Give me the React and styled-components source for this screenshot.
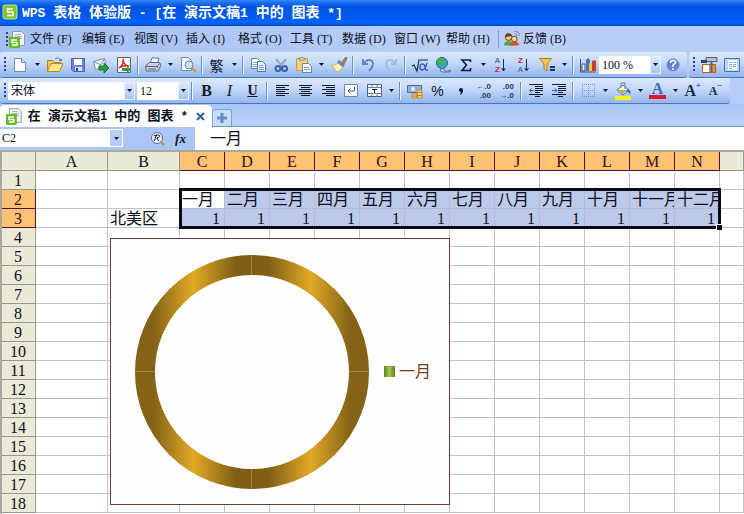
import React, { useState } from "react";
import styled, { createGlobalStyle, css } from "styled-components";

const cjk = '"Liberation Serif", "Noto Sans CJK SC", sans-serif';

const GlobalStyle = createGlobalStyle`
  *, *::before, *::after { box-sizing: border-box; }
  body { margin: 0; overflow: hidden; background: #fff; }
  button, input, select { font: inherit; color: inherit; }
`;

const Page = styled.div`
  display: flex;
  flex-direction: column;
  height: 100vh;
  overflow: hidden;
  font: 12px/16px ${cjk};
  color: #0a1020;
`;

const TitleBar = styled.header`
  display: flex;
  align-items: center;
  gap: 4px;
  flex: none;
  height: 26px;
  padding: 0 2px 2px;
  color: #fff;
  background: linear-gradient(#2f8af8 0, #1a6df0 3px, #0054e3 7px, #0058ee 16px, #0066ff 22px, #0048c8 26px);
`;

const TitleText = styled.h1`
  margin: 0;
  font: bold 14px/20px "Noto Sans CJK SC", sans-serif;
  white-space: pre;
`;

const Latin = styled.span`
  font-family: "Liberation Mono", monospace;
  font-size: ${(p) => p.$size}px;
`;

const MenuBar = styled.nav`
  display: flex;
  align-items: center;
  flex: none;
  height: 26px;
  padding-left: 2px;
  background: linear-gradient(90deg, #a3bef3, #b9cff8 60%, #b9cff8);
`;

const MenuItem = styled.button`
  display: flex;
  align-items: center;
  gap: 3px;
  width: ${(p) => (p.$wide ? "auto" : "52px")};
  height: 22px;
  padding: 0;
  border: 0;
  background: none;
  white-space: nowrap;
`;

const MenuIcon = styled.span`
  display: flex;
  width: 21px;
`;

const MenuDivider = styled.span`
  flex: none;
  width: 1px;
  height: 18px;
  margin-right: 4px;
  background: #7c9cd4;
`;

const GripDots = styled.span`
  flex: none;
  width: ${(p) => p.$width || 8}px;
  height: 15px;
  background: repeating-linear-gradient(#27418e 0 2px, transparent 2px 4px) 4px 0 / 2px 15px no-repeat;
`;

const ToolRow = styled.div`
  display: flex;
  flex: none;
  gap: 2px;
  height: 26px;
  background: #b5cdf8;
`;

const Toolbar = styled.div`
  display: flex;
  align-items: center;
  flex: ${(p) => (p.$fill ? "1 1 0" : "none")};
  min-width: 0;
  height: 26px;
  overflow: hidden;
  padding-right: ${(p) => (p.$fill ? 0 : 3)}px;
  border-bottom: 1px solid #4a76bd;
  border-radius: ${(p) => (p.$fill ? "3px 0 0 3px" : "3px")};
  background: linear-gradient(#dde9fd, #c2d7fa 45%, #94b4ec);
`;

const ToolButton = styled.button`
  display: flex;
  flex: none;
  align-items: center;
  justify-content: center;
  width: 23px;
  height: 23px;
  padding: 0;
  border: 0;
  background: none;
  &:hover { background: #ffe0a0; }
`;

const DropButton = styled(ToolButton)`
  width: 12px;
`;

const Divider = styled.span`
  flex: none;
  width: 6px;
  height: 18px;
  background: linear-gradient(90deg, transparent 2px, #6d8fcb 2px 3px, #eef5ff 3px 4px, transparent 4px);
`;

const ComboBox = styled.span`
  display: grid;
  flex: none;
  width: ${(p) => p.$width}px;
  height: 18px;
  margin-right: ${(p) => p.$gap || 0}px;
  background: #fff;
`;

const ComboSelect = styled.select`
  grid-area: 1 / 1;
  min-width: 0;
  padding: 0 14px 0 3px;
  border: 0;
  appearance: none;
  background: transparent;
`;

const ComboArrow = styled.span`
  grid-area: 1 / 1;
  justify-self: end;
  display: flex;
  align-items: center;
  justify-content: center;
  width: 11px;
  background: linear-gradient(#dce8fc, #a9c3f2);
  border: 1px solid #e8f0ff;
  pointer-events: none;
`;

const TabStrip = styled.div`
  display: flex;
  align-items: flex-end;
  flex: none;
  height: 23px;
  background: linear-gradient(#a9c6f6, #b8d0f9);
  border-bottom: 1px solid #6b93d6;
`;

const DocTab = styled.div`
  display: flex;
  align-items: center;
  height: 22px;
  padding-left: 6px;
  border-radius: 4px 5px 0 0;
  background: #fff;
  margin-bottom: -1px;
`;

const TabLabel = styled.button`
  display: flex;
  align-items: center;
  gap: 5px;
  width: 182px;
  padding: 0;
  border: 0;
  background: none;
  font: bold 13px/18px "Noto Sans CJK SC", sans-serif;
  white-space: pre;
`;

const TabClose = styled.button`
  display: flex;
  justify-content: center;
  width: 24px;
  padding: 0;
  border: 0;
  background: none;
`;

const NewTab = styled.button`
  display: flex;
  align-items: center;
  justify-content: center;
  width: 20px;
  height: 17px;
  padding: 0;
  border: 1px solid #7da2df;
  border-bottom: 0;
  border-radius: 3px 3px 0 0;
  background: #c9dcfb;
`;

const FormulaBar = styled.div`
  display: flex;
  flex: none;
  height: 23px;
  background: #aac5f6;
`;

const NameBox = styled.div`
  display: flex;
  width: 123px;
  height: 18px;
  margin-top: 2px;
  padding-right: 1px;
  background: #fff;
`;

const NameInput = styled.input`
  flex: 1;
  min-width: 0;
  padding: 0 2px;
  border: 0;
  font-size: 12px;
  outline: none;
`;

const NameArrow = styled.button`
  display: flex;
  align-items: center;
  justify-content: center;
  width: 12px;
  height: 16px;
  margin-top: 1px;
  padding: 0;
  border: 0;
  background: #b7cdf8;
`;

const FormulaTools = styled.div`
  display: flex;
  align-items: center;
  justify-content: flex-end;
  width: 72px;
  padding-right: 3px;
`;

const FormulaInput = styled.input`
  flex: 1;
  min-width: 0;
  padding: 0 15px 3px;
  border: 0;
  background: #fff;
  font-size: 16px;
  outline: none;
`;

const Sheet = styled.main`
  position: relative;
  flex: 1;
  min-height: 0;
  overflow: hidden;
  border-top: 2px solid #a9a99e;
  border-left: 2px solid #a9a99e;
`;

const Grid = styled.table`
  width: 100%;
  table-layout: fixed;
  border-collapse: separate;
  border-spacing: 0;
  font-size: 16px;
  line-height: 18px;
`;

const Col = styled.col`
  width: ${(p) => (p.$w ? `${p.$w}px` : "auto")};
`;

const Head = styled.th`
  height: 19px;
  padding: 1px 0 0;
  overflow: hidden;
  font-weight: normal;
  line-height: 17px;
  text-align: center;
  background: #ebe9d8;
  border-right: 1px solid #98988a;
  border-bottom: 1px solid #98988a;
  ${(p) => p.$row && css`padding-right: 1px;`}
  ${(p) => p.$on && css`
    background: #ffc173;
    border-color: #4a1436;
    color: #301010;
  `}
`;

const Cell = styled.td`
  height: 19px;
  padding: 1px 2px 0;
  overflow: hidden;
  line-height: 17px;
  white-space: nowrap;
  text-align: ${(p) => (p.$num ? "right" : "left")};
  border-right: 1px solid #c3c3c3;
  border-bottom: 1px solid #c3c3c3;
  background: #fff;
  ${(p) => p.$num && css`padding-right: 4px;`}
  ${(p) => p.$selected && css`background: #bdc9e8; border-color: #b0bcda;`}
  ${(p) => p.$active && css`background: #fff;`}
`;

const Selection = styled.div`
  position: absolute;
  left: 177px;
  top: 36px;
  width: 542px;
  height: 41px;
  border: 3px solid #0a0a14;
  pointer-events: none;
  &::after {
    content: "";
    position: absolute;
    right: -4px;
    bottom: -4px;
    width: 6px;
    height: 6px;
    background: #0a0a14;
    border-top: 1px solid #fff;
    border-left: 1px solid #fff;
  }
`;

const ChartFrame = styled.figure`
  position: absolute;
  left: 108px;
  top: 86px;
  display: flex;
  align-items: center;
  gap: 15px;
  width: 340px;
  height: 267px;
  margin: 0;
  padding: 0 0 0 24px;
  background: #fefefe;
  border: 1px solid #6f3d26;
`;

const Legend = styled.figcaption`
  display: flex;
  align-items: center;
  gap: 4px;
  font-size: 16px;
  line-height: 20px;
  color: #6f3d26;
`;

const Swatch = styled.span`
  width: 11px;
  height: 11px;
  background: linear-gradient(90deg, #5f7f28, #a0cc3c 50%, #5f7f28);
`;

/* Splits a label so that Latin runs take a narrower face than the Chinese ones. */
function Mixed({ text, size }) {
  return (
    <span>
      {text.split(/([\x20-\x7e]+)/).map((part, i) => (i % 2 ? <Latin key={i} $size={size}>{part}</Latin> : part))}
    </span>
  );
}

const Svg = ({ w = 18, h = 18, box, children }) => (
  <svg width={w} height={h} viewBox={box || `0 0 ${w} ${h}`} fill="none" aria-hidden="true">{children}</svg>
);

const Down = () => <Svg w={5} h={3}><path d="M0 0h5L2.500 3z" fill="#101830" /></Svg>;

const lines = (rows, stroke = "#10182c") => rows.map(([x, y, l]) => <path key={y + "-" + x} d={`M${x} ${y}.5h${l}`} stroke={stroke} />);

const icons = {
  new: <Svg><path d="M3.500 2.500h7l4 4v9h-11z" fill="#fdfeff" stroke="#7888a8" /><path d="M10.500 2.500v4h4" fill="#cbd8ee" stroke="#7888a8" /></Svg>,
  open: <Svg><path d="M1.500 15V4.500h5l2 2h6v3" fill="#f5c94c" stroke="#b4821c" /><path d="M1.500 15.500l3.500-8h12l-3.500 8z" fill="#ffe48a" stroke="#b98a25" /><path d="M9 3q4-3 6 2m-2-1l2 1 1-2" stroke="#3b78b8" /></Svg>,
  save: <Svg><path d="M2.500 2.500h13v13h-11l-2-2z" fill="#6f86d8" stroke="#5262b4" /><path d="M5 3h8v6H5z" fill="#f4f7fe" /><path d="M6 11h7v4H6z" fill="#dbe0ef" /><path d="M7 12h2v3H7z" fill="#33418f" /></Svg>,
  mail: <Svg><path d="M1.500 5.500l11-3 2 8-11 3z" fill="#f0f5fd" stroke="#8191ad" /><path d="M1.500 5.500L9 9l3.500-6.500" stroke="#8191ad" /><path d="M7 10h5V7l5 5-5 5v-3H7z" fill="#22a238" stroke="#137325" /></Svg>,
  pdf: <Svg><path d="M2.500 1.500h13v15h-13z" fill="#fff" stroke="#5a6478" /><path d="M4 12q5-3 4-9 1 7 6 7-6-1-10 2z" stroke="#dd2525" strokeWidth="1.500" /><path d="M7 12h5v-2l4 3.500-4 3.500v-2H7z" fill="#26a03a" /></Svg>,
  print: <Svg><path d="M6 8l2-6h7l-2 6z" fill="#fff" stroke="#6c7890" /><path d="M1.500 10l4-3.500h10l1.500 3-3 5.500H2.500z" fill="#cbd2de" stroke="#5c677c" /><path d="M2 10.500h11l3-3M4 13h8" stroke="#5c677c" /><path d="M13 11h1" stroke="#2aa33a" strokeWidth="2" /></Svg>,
  preview: <Svg><path d="M2.500 1.500h7l3 3v10h-10z" fill="#fafcff" stroke="#7c8ca8" /><circle cx="10" cy="9" r="4" fill="#c9e4f6" stroke="#71869f" /><path d="M13 12l4 4" stroke="#d7962e" strokeWidth="2" /></Svg>,
  copy: <Svg><path d="M2.500 2.500h6l2 2v8h-8z" fill="#fff" stroke="#6680ba" />{lines([[4, 6, 5], [4, 8, 5], [4, 10, 4]], "#8ba5dc")}<path d="M8.500 5.500h5l3 3v7h-8z" fill="#f1f6ff" stroke="#5572b4" />{lines([[10, 9, 4], [10, 11, 5], [10, 13, 5]], "#7390cc")}</Svg>,
  cut: <Svg><path d="M4 3l6 7M14 3l-6 7" stroke="#97a6c2" strokeWidth="2" /><circle cx="6" cy="12.500" r="2.500" stroke="#3c60b4" strokeWidth="2" /><circle cx="12.500" cy="12.500" r="2.500" stroke="#3c60b4" strokeWidth="2" /></Svg>,
  paste: <Svg><path d="M1.500 2.500h11v12h-11z" fill="#f4d378" stroke="#c59a4b" /><path d="M4 4V2h2q1-2 2 0h2v2z" fill="#e3e3e3" stroke="#8b8b8b" /><path d="M7.500 7.500h6l3 3v6h-9z" fill="#f7faff" stroke="#6e82a8" />{lines([[9, 11, 5], [9, 13, 6]], "#819ac9")}</Svg>,
  brush: <Svg><path d="M12 6l4-5 1 1-3 6z" fill="#a88a64" stroke="#7b6a58" /><path d="M1 9l6 7q4-1 6-5L8 7q-3 3-7 2z" fill="#fbefb8" stroke="#cdb468" /><path d="M8 5l6 5" stroke="#76849c" strokeWidth="3" /></Svg>,
  undo: <Svg><path d="M4 3v5h5M4 8q5-6 9-3 3 4-3 10" stroke="#6787c9" strokeWidth="2" /></Svg>,
  redo: <Svg><path d="M14 3v5H9M14 8q-5-6-9-3-3 4 3 10" stroke="#a5bbde" strokeWidth="2" /></Svg>,
  root: <Svg><path d="M1 10l2-1 3 6L8 4h9" stroke="#1c2848" strokeWidth="1.200" /><path d="M16 7q-2 7-5 7-2 0-2-3t2-3q3 0 3 4 1 3 3 2" stroke="#3c63b7" strokeWidth="1.500" /></Svg>,
  globe: <Svg><circle cx="8" cy="7" r="5.500" fill="#3c9edc" stroke="#27649a" /><path d="M5 3q4-2 6 0L9 8l-4 2q-4-3 0-7zM11 6l2 2-2 3z" fill="#3fb64c" /><path d="M6 14q2-3 4 0t6 0q2 2-2 2H9q-3 0-3-2z" fill="#d8e0ea" stroke="#5b6a80" /></Svg>,
  sum: <Svg><path d="M13.500 6V4H5l4.500 5L5 14.500h8.500v-2.500" stroke="#141e38" strokeWidth="1.600" /></Svg>,
  filter: <Svg><path d="M1.500 2.500h12L9 8v7l-3-2V8z" fill="#f7c94f" stroke="#b77b22" /><path d="M12 11h5M12 14h5" stroke="#27334e" strokeWidth="2" /></Svg>,
  chart: <Svg><path d="M1.500 3v13h15" stroke="#47526b" /><path d="M3 8h3v7H3z" fill="#eef2fa" stroke="#47526b" /><path d="M7 4l2-2 2 2v11H7z" fill="#4173cc" /><path d="M10 7h3v8h-3z" fill="#f0c52d" /><path d="M13 5l2-1 2 1v10h-4z" fill="#c8402d" /></Svg>,
  help: <Svg><circle cx="9" cy="9" r="6.500" fill="#6681d5" stroke="#a9b5d6" /><path d="M6.500 7q0-3 3-2.500 3 .5 1.500 3L9 9v2m0 1v2" stroke="#fff" strokeWidth="1.500" /></Svg>,
  panel: <Svg><path d="M6 1.500h11v4H6z" fill="#c4c2b8" stroke="#555f74" /><path d="M1 4h6v3H1z" fill="#344366" /><path d="M2.500 8.500h13v8h-13z" fill="#f39424" stroke="#c05b1c" /><path d="M3 9h6v7H3z" fill="#fff" /><path d="M11.500 6v10" stroke="#2d6fbf" strokeWidth="2" /></Svg>,
  view: <Svg><path d="M1.500 2.500h15v13h-15z" fill="#b8d4f8" stroke="#4477b9" /><path d="M5 4h9v10H5z" fill="#fff" />{lines([[6, 6, 3], [10, 6, 3], [6, 8, 3], [10, 8, 3], [6, 10, 3], [10, 10, 3], [6, 12, 3]], "#78a4d8")}</Svg>,
  left: <Svg>{lines([[3, 3, 13], [3, 5, 9], [3, 7, 13], [3, 9, 9], [3, 11, 13], [3, 13, 9]])}</Svg>,
  center: <Svg>{lines([[3, 3, 13], [5, 5, 9], [3, 7, 13], [5, 9, 9], [3, 11, 13], [5, 13, 9]])}</Svg>,
  right: <Svg>{lines([[3, 3, 13], [7, 5, 9], [3, 7, 13], [7, 9, 9], [3, 11, 13], [7, 13, 9]])}</Svg>,
  wrap: <Svg><path d="M2.500 2.500h13v12h-13z" fill="#fff" stroke="#6e86b2" /><path d="M12.500 5v4h-6M8.500 6.500L6 9l2.500 2.500" stroke="#3f5f9f" /></Svg>,
  merge: <Svg><path d="M2.500 2.500h14v12h-14z" fill="#fff" stroke="#455e91" /><path d="M3 5.500h13M3 11.500h13M7 3v2M12 3v2M7 12v2M12 12v2" stroke="#6a82b6" /><path d="M7 7.500h5M9.500 7v4" stroke="#10182c" /></Svg>,
  money: <Svg><path d="M1.500 3.500h14v7h-14z" fill="#9aaede" stroke="#4c69a5" /><circle cx="7" cy="7" r="2" fill="#e6edfa" /><path d="M6 12h5v4H6zM11 8h5v8h-5z" fill="#f6cf66" stroke="#c08a30" /><path d="M11 10.500h5M11 13.500h5M6 14h5" stroke="#c08a30" /></Svg>,
  comma: <Svg><circle cx="9" cy="8" r="2" fill="#10182c" /><path d="M11 8q0 4-3 5 1-2 1-4z" fill="#10182c" /></Svg>,
  outdent: <Svg>{lines([[2, 2, 14], [8, 4, 8], [8, 6, 8], [8, 8, 8], [8, 10, 5], [2, 12, 14], [8, 14, 5]])}<path d="M7 8.500H3M4.500 6.500l-2 2 2 2" stroke="#3763bb" /></Svg>,
  indent: <Svg>{lines([[2, 2, 14], [8, 4, 8], [8, 6, 8], [8, 8, 8], [8, 10, 5], [2, 12, 14], [8, 14, 5]])}<path d="M2 8.500h5M5 6.500l2 2-2 2" stroke="#3763bb" /></Svg>,
  border: <Svg><path d="M3.500 2v13M9.500 2v13M15.500 2v13M3 2.500h13M3 8.500h13M3 14.500h13" stroke="#7f91b5" strokeDasharray="1 1" /></Svg>,
  fill: <Svg><path d="M1 14h16v4H1z" fill="#f4f21c" /><path d="M3 8l6-5 6 5-6 5z" fill="#edf4ff" stroke="#596f9b" /><path d="M7 6V1h4v6" stroke="#6f82a5" /><path d="M13 7q5 1 3 6-1-4-4-3z" fill="#3e68b4" /><path d="M4 8h9l-4 4z" fill="#d3aa48" /></Svg>,
  wpsDoc: <Svg w={17} h={17}><path d="M3.500.5h9l3 3v11h-12z" fill="#f3f6f8" stroke="#909aa8" />{lines([[6, 3, 6], [6, 5, 7], [6, 7, 7]], "#aab2bd")}<path d="M0 6h11v11H0z" fill="#67b927" /><path d="M8 9H3v2.500h5V14H3" stroke="#fff" strokeWidth="1.500" /></Svg>,
  search: <Svg><circle cx="8" cy="8" r="5.500" fill="#e9eff9" stroke="#60738e" /><path d="M5.500 11l1.500-6h2q2 0 1.500 1.500T8 8l1.500 3M5 5.500h3" stroke="#182238" /><path d="M12 12l3 3" stroke="#be8b3d" strokeWidth="2" /></Svg>,
  people: <Svg w={17} box="0 0 18 18"><circle cx="6" cy="7" r="3.500" fill="#f5c88e" stroke="#6f3519" /><path d="M2 7q1-7 8-2L8 6z" fill="#723b1d" /><path d="M1 16q0-5 5-5t5 5z" fill="#4daf34" /><circle cx="12" cy="9" r="3" fill="#ffd29d" stroke="#6f3519" /><path d="M7 16q0-4 5-4t5 4z" fill="#e5502c" /><path d="M12 3q3 0 3 3M12 .8q6 0 5 5" stroke="#6b84b5" /></Svg>,
};

const Glyph = styled.span`
  font-family: ${(p) => p.$face || '"Liberation Serif", serif'};
  font-size: ${(p) => p.$size || 16}px;
  line-height: 18px;
  font-weight: ${(p) => (p.$plain ? "normal" : "bold")};
  font-style: ${(p) => (p.$italic ? "italic" : "normal")};
  text-decoration: ${(p) => (p.$under ? "underline" : "none")};
  color: ${(p) => p.$color || "#10182c"};
`;

const FontColor = styled(Glyph)`
  height: 17px;
  padding: 0 3px;
  line-height: 14px;
  border-bottom: 4px solid #e0182c;
`;

const DecimalStack = styled.span`
  display: flex;
  flex-direction: column;
  align-items: flex-end;
  font: bold 8px/9px "Liberation Sans", sans-serif;
  color: #2c3a5c;
`;

const SizeGlyph = styled.span`
  display: flex;
  align-items: flex-start;
  font: bold ${(p) => p.$size}px/18px "Liberation Serif", serif;
  color: #1c2a48;
`;

const Sup = styled.span`
  font: bold 8px/8px "Liberation Sans", sans-serif;
  color: #5577c0;
`;

const SortStack = styled.span`
  display: flex;
  align-items: center;
  gap: 1px;
`;

const SortLetters = styled.span`
  display: flex;
  flex-direction: column;
  font: bold 8px/9px "Liberation Sans", sans-serif;
  color: #5a74c4;
  & > :${(p) => (p.$redFirst ? "first" : "last")}-child { color: #cf2a35; }
`;

function Sort({ a, b }) {
  return (
    <SortStack>
      <SortLetters $redFirst={a === "Z"}><span>{a}</span><span>{b}</span></SortLetters>
      <Svg w={5} h={14}><path d="M2.500 1v12M.5 10l2 3 2-3" stroke="#1e2c50" /></Svg>
    </SortStack>
  );
}

function Decimals({ top, bottom }) {
  return <DecimalStack><span>{top}</span><span>{bottom}</span></DecimalStack>;
}

const standardTools = [
  ["新建", icons.new, 1], ["打开", icons.open], ["保存", icons.save], ["邮件", icons.mail], ["输出PDF", icons.pdf], "|",
  ["打印", icons.print, 1], ["打印预览", icons.preview], "|",
  ["繁体转换", <Glyph key="f" $face='"Noto Sans CJK SC", sans-serif' $size={14} $plain>繁</Glyph>, 1], "|",
  ["复制", icons.copy], ["剪切", icons.cut], ["粘贴", icons.paste, 1], ["格式刷", icons.brush], "|",
  ["撤消", icons.undo], ["恢复", icons.redo], "|",
  ["公式", icons.root], ["超链接", icons.globe], ["求和", icons.sum, 1],
  ["升序", <Sort key="a" a="A" b="Z" />], ["降序", <Sort key="z" a="Z" b="A" />], ["筛选", icons.filter, 1], "|",
  ["图表", icons.chart],
];

const formatTools = [
  "|", ["加粗", <Glyph key="b">B</Glyph>], ["倾斜", <Glyph key="i" $italic $plain>I</Glyph>], ["下划线", <Glyph key="u" $size={14} $under>U</Glyph>], "|",
  ["左对齐", icons.left], ["居中", icons.center], ["右对齐", icons.right], ["自动换行", icons.wrap], ["合并单元格", icons.merge, 1], "|",
  ["货币", icons.money], ["百分比", <Glyph key="p" $size={14} $plain $face='"Liberation Sans", sans-serif'>%</Glyph>], ["千位分隔", icons.comma],
  ["增加小数位", <Decimals key="d" top="←.0" bottom=".00" />], ["减少小数位", <Decimals key="e" top=".00" bottom="→.0" />], "|",
  ["减少缩进", icons.outdent], ["增加缩进", icons.indent], "|",
  ["边框", icons.border, 1], ["填充颜色", icons.fill, 1],
  ["字体颜色", <FontColor key="t" $size={16} $color="#3d68bd">A</FontColor>, 1],
  ["增大字号", <SizeGlyph key="g" $size={16}>A<Sup>+</Sup></SizeGlyph>], ["减小字号", <SizeGlyph key="s" $size={12}>A<Sup>−</Sup></SizeGlyph>],
];

function Tools({ items }) {
  return items.map((item, i) => {
    if (item === "|") return <Divider key={i} />;
    const [label, icon, drop] = item;
    return (
      <React.Fragment key={i}>
        <ToolButton type="button" aria-label={label}>{icon}</ToolButton>
        {drop && <DropButton type="button" aria-label={`${label}选项`}><Down /></DropButton>}
      </React.Fragment>
    );
  });
}

function Combo({ label, options, width, gap }) {
  return (
    <ComboBox $width={width} $gap={gap}>
      <ComboSelect aria-label={label}>{options.map((o) => <option key={o}>{o}</option>)}</ComboSelect>
      <ComboArrow><Down /></ComboArrow>
    </ComboBox>
  );
}

const menus = ["文件(F)", "编辑(E)", "视图(V)", "插入(I)", "格式(O)", "工具(T)", "数据(D)", "窗口(W)", "帮助(H)"];
const columns = "ABCDEFGHIJKLMN".split("");
const months = ["一月", "二月", "三月", "四月", "五月", "六月", "七月", "八月", "九月", "十月", "十一月", "十二月"];

function MenuLabel({ text }) {
  return <><span>{text.slice(0, 2)}</span><span>{text.slice(2)}</span></>;
}

function SheetRow({ n }) {
  const on = n === 2 || n === 3;
  return (
    <tr>
      <Head scope="row" $row $on={on}>{n}</Head>
      <Cell />
      <Cell>{n === 3 ? "北美区" : null}</Cell>
      {months.map((m, i) => (
        <Cell key={m} $selected={on} $active={n === 2 && i === 0} $num={n === 3}>
          {n === 2 ? m : n === 3 ? 1 : null}
        </Cell>
      ))}
      <Cell />
    </tr>
  );
}

function Ring() {
  return (
    <svg width="234" height="234" viewBox="-117 -117 234 234" role="img" aria-label="一月">
      <defs>
        <linearGradient id="gold" gradientUnits="userSpaceOnUse" x1="-117" y1="0" x2="117" y2="0">
          <stop offset="0" stopColor="#846317" />
          <stop offset=".08" stopColor="#846317" />
          <stop offset=".25" stopColor="#e1a925" />
          <stop offset=".43" stopColor="#805e16" />
          <stop offset=".57" stopColor="#805e16" />
          <stop offset=".75" stopColor="#e1a925" />
          <stop offset=".92" stopColor="#846317" />
          <stop offset="1" stopColor="#846317" />
        </linearGradient>
      </defs>
      <circle r="107" fill="none" stroke="url(#gold)" strokeWidth="20" />
      <path d="M-.5-117v20M-.5 97v20M-117-.5h20M97-.5h20" stroke="#a08444" />
    </svg>
  );
}

export default function App() {
  const [name, setName] = useState("C2");
  const [formula, setFormula] = useState("一月");
  return (
    <Page>
      <GlobalStyle />
      <TitleBar>
        <Svg w={16} h={16}><rect x="1" y="1" width="14" height="14" rx="2" fill="#7cc72e" stroke="#b8e582" /><path d="M11 5H5.500v3H11v3.500H5" stroke="#fff" strokeWidth="1.500" /></Svg>
        <TitleText><Mixed size={13} text="WPS 表格 体验版 - [在 演示文稿1 中的 图表 *]" /></TitleText>
      </TitleBar>
      <MenuBar>
        <GripDots $width={7} />
        <MenuIcon>{icons.wpsDoc}</MenuIcon>
        {menus.map((m) => <MenuItem type="button" key={m}><MenuLabel text={m} /></MenuItem>)}
        <MenuDivider />
        <MenuItem type="button" $wide>{icons.people}<MenuLabel text="反馈(B)" /></MenuItem>
      </MenuBar>
      <ToolRow>
        <Toolbar role="toolbar" aria-label="常用">
          <GripDots />
          <Tools items={standardTools} />
          <Combo label="显示比例" options={["100 %", "75 %", "50 %"]} width={62} />
          <ToolButton type="button" aria-label="帮助">{icons.help}</ToolButton>
        </Toolbar>
        <Toolbar $fill role="toolbar" aria-label="视图">
          <GripDots />
          <Tools items={[["任务窗格", icons.panel], ["阅读版式", icons.view]]} />
        </Toolbar>
      </ToolRow>
      <ToolRow>
        <Toolbar role="toolbar" aria-label="格式">
          <GripDots />
          <Combo label="字体" options={["宋体", "黑体", "楷体"]} width={127} gap={2} />
          <Combo label="字号" options={["12", "14", "16"]} width={52} />
          <Tools items={formatTools} />
        </Toolbar>
      </ToolRow>
      <TabStrip>
        <DocTab>
          <TabLabel type="button">{icons.wpsDoc}<Mixed size={12} text="在 演示文稿1 中的 图表 *" /></TabLabel>
          <TabClose type="button" aria-label="关闭"><Svg w={9} h={9}><path d="M1 1l7 7M8 1L1 8" stroke="#2b62a8" strokeWidth="2" /></Svg></TabClose>
        </DocTab>
        <NewTab type="button" aria-label="新建标签"><Svg w={10} h={10}><path d="M5 0v10M0 5h10" stroke="#5d8dcc" strokeWidth="3" /></Svg></NewTab>
      </TabStrip>
      <FormulaBar>
        <NameBox>
          <NameInput aria-label="名称框" value={name} onChange={(e) => setName(e.target.value)} />
          <NameArrow type="button" aria-label="选择名称"><Down /></NameArrow>
        </NameBox>
        <FormulaTools>
          <ToolButton type="button" aria-label="浏览公式">{icons.search}</ToolButton>
          <ToolButton type="button" aria-label="插入函数"><Glyph $size={13} $italic>fx</Glyph></ToolButton>
        </FormulaTools>
        <FormulaInput aria-label="编辑栏" value={formula} onChange={(e) => setFormula(e.target.value)} />
      </FormulaBar>
      <Sheet>
        <Grid>
          <colgroup>
            <Col $w={34} /><Col $w={72} /><Col $w={72} />
            {months.map((m) => <Col key={m} $w={45} />)}
            <Col />
          </colgroup>
          <thead>
            <tr>
              <Head />
              {columns.map((c, i) => <Head key={c} scope="col" $on={i > 1}>{c}</Head>)}
              <Head />
            </tr>
          </thead>
          <tbody>
            {Array.from({ length: 18 }, (_, i) => <SheetRow key={i} n={i + 1} />)}
          </tbody>
        </Grid>
        <Selection />
        <ChartFrame>
          <Ring />
          <Legend><Swatch />一月</Legend>
        </ChartFrame>
      </Sheet>
    </Page>
  );
}
